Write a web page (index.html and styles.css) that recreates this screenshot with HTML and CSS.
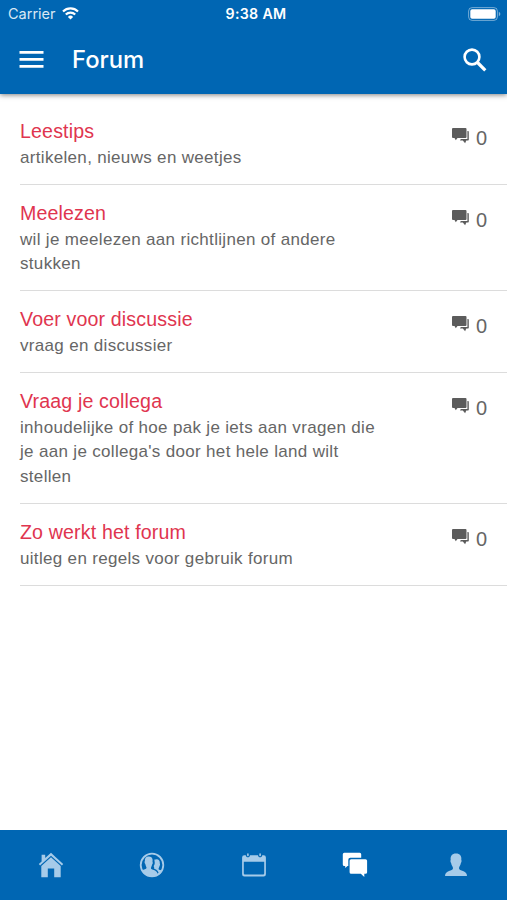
FILE: index.html
```
<!DOCTYPE html>
<html lang="nl">
  <head>
    <meta charset="UTF-8" />
    <meta name="viewport" content="width=device-width, initial-scale=1.0" />
    <title>Forum</title>
    <link rel="stylesheet" href="styles.css">
  </head>
  <body>
    <!-- Icon shared by the forum rows -->
    <svg class="sprite" width="0" height="0">
      <symbol id="comments" viewBox="0 0 17 16">
        <path d="M1 0h12.500a1 1 0 0 1 1 1v8a1 1 0 0 1-1 1H5.500l-1.700 2.200L2.500 10H1a1 1 0 0 1-1-1V1a1 1 0 0 1 1-1z" />
        <path d="M15.400 3h.6a.8.8 0 0 1 .8.8v7.900a.8.8 0 0 1-.8.8h-1.700l-1.200 2.700-2.300-2.700H8l.8-1.600h6.600z" />
      </symbol>
    </svg>

    <header class="header">
      <div class="status-bar">
        <div class="carrier">
          <span>Carrier</span>
          <svg width="17" height="13" viewBox="0 0 17 13" fill="none" stroke="#fff" stroke-width="2.200">
            <path d="M1 4.500a10.800 10.800 0 0 1 15 0" />
            <path d="M3.800 7.500a6.700 6.700 0 0 1 9.400 0" />
            <path d="M8.500 12.600L5.900 9.900a3.700 3.700 0 0 1 5.200 0z" fill="#fff" stroke="none" />
          </svg>
        </div>
        <span class="time">9:38 AM</span>
        <svg class="battery" width="33" height="14" viewBox="0 0 33 14">
          <rect x="0.600" y="0.600" width="28.800" height="12.800" rx="3.500" fill="none" stroke="#fff" stroke-opacity="0.450" />
          <rect x="2.300" y="2.300" width="25.400" height="9.400" rx="1.800" fill="#fff" />
          <path d="M30.800 4.800q1.600 .8 1.600 2.200t-1.600 2.200z" fill="#fff" fill-opacity="0.500" />
        </svg>
      </div>
      <div class="toolbar">
        <svg class="menu-icon" width="25" height="17" viewBox="0 0 25 17" fill="#fff">
          <path d="M.5 0h24v2.700H.5zM.5 7h24v2.700H.5zM.5 14h24v2.700H.5z" />
        </svg>
        <h1>Forum</h1>
        <svg class="search-icon" width="24" height="24" viewBox="0 0 24 24" fill="none" stroke="#fff">
          <circle cx="9" cy="9" r="7.400" stroke-width="2.600" />
          <path d="M14 14l8.300 8.300" stroke-width="3.200" />
        </svg>
      </div>
    </header>

    <main class="forum-list">
      <div class="forum-item">
        <div class="forum-text">
          <h2>Leestips</h2>
          <p>artikelen, nieuws en weetjes</p>
        </div>
        <div class="count"><svg><use href="#comments" /></svg><span>0</span></div>
      </div>
      <div class="forum-item">
        <div class="forum-text">
          <h2>Meelezen</h2>
          <p>wil je meelezen aan richtlijnen of andere stukken</p>
        </div>
        <div class="count"><svg><use href="#comments" /></svg><span>0</span></div>
      </div>
      <div class="forum-item">
        <div class="forum-text">
          <h2>Voer voor discussie</h2>
          <p>vraag en discussier</p>
        </div>
        <div class="count"><svg><use href="#comments" /></svg><span>0</span></div>
      </div>
      <div class="forum-item">
        <div class="forum-text">
          <h2>Vraag je collega</h2>
          <p>inhoudelijke of hoe pak je iets aan vragen die je aan je collega's door het hele land wilt stellen</p>
        </div>
        <div class="count"><svg><use href="#comments" /></svg><span>0</span></div>
      </div>
      <div class="forum-item">
        <div class="forum-text">
          <h2>Zo werkt het forum</h2>
          <p>uitleg en regels voor gebruik forum</p>
        </div>
        <div class="count"><svg><use href="#comments" /></svg><span>0</span></div>
      </div>
    </main>

    <nav class="tabs">
      <a class="tab">
        <svg width="26" height="26" viewBox="0 0 26 26">
          <path d="M13 .8L17.500 5l7.700 6.900-1.300 1.500L13 3.700 2.100 13.400.8 11.900 3.600 9.400V2.700h3.600v3.400z" />
          <path d="M13 5.300l9.700 8.600v11.300h-6.500v-8.700H9.800v8.700H3.300V13.900z" />
        </svg>
      </a>
      <a class="tab">
        <svg width="26" height="26" viewBox="0 0 26 26">
          <circle cx="13" cy="13" r="11.300" fill="none" stroke="#a6cbe9" stroke-width="1.800" />
          <path d="M2.600 18.400c2.600-.9 4.700-1.200 4.900-2.400.2-1-.9-2-1.200-4-.9-1-.9-2.200-.4-2.900C5.400 5.900 7.400 4.200 10 4.500c3.200.2 4 2.500 3.500 5.200.5.800.3 2-.4 2.900-.3 1.900-1.300 2.900-1.100 4 .2 1.200 5.500 1.500 6.300 4.400l.5 2.300C13.400 26 6 24.600 2.600 18.400z" />
          <path d="M15.100 7.800c3.500-1.500 6.200 0 5.700 3.800.5.800.2 1.900-.3 2.500-.3 1.600-1.100 2.200-.9 3.200.2.700 2.300.9 4 1.300-.9 1.700-2 3-3.600 4.100-.2-3.300-2.100-5-4.900-5.900.5-.7-.1-1.500-.4-2.900.9-1.300 1.300-2.800.9-4.200.1-.8-.1-1.400-.5-1.900z" />
        </svg>
      </a>
      <a class="tab">
        <svg width="26" height="26" viewBox="0 0 26 26">
          <path fill-rule="evenodd" d="M3.300 3.200h1.500c.2 2.700 4 2.700 4.200 0h8c.2 2.700 4 2.700 4.200 0h1.500a2.200 2.200 0 0 1 2.200 2.200v16.800a2.200 2.200 0 0 1-2.200 2.200H3.300a2.200 2.200 0 0 1-2.200-2.200V5.400a2.200 2.200 0 0 1 2.200-2.200zM2.800 9.800v11.500c0 .9.500 1.300 1.300 1.300h17.800c.8 0 1.300-.4 1.300-1.300V9.800z" />
          <rect x="6.100" y="1.200" width="1.600" height="3" rx=".8" />
          <rect x="18.300" y="1.200" width="1.600" height="3" rx=".8" />
        </svg>
      </a>
      <a class="tab active">
        <svg width="26" height="26" viewBox="0 0 26 26">
          <path d="M2.300.8h15.400a1.500 1.500 0 0 1 1.500 1.500v3.500H8.300a2 2 0 0 0-2 2V14H5.500l-2.300 2v-2h-.9a1.500 1.500 0 0 1-1.500-1.500V2.300A1.500 1.500 0 0 1 2.300.8z" />
          <path d="M9.200 7.200h14.300a1.600 1.600 0 0 1 1.600 1.600v11.400a1.600 1.600 0 0 1-1.600 1.600h-1.200V25l-3.500-3.200H9.200a1.600 1.600 0 0 1-1.600-1.600V8.800a1.600 1.600 0 0 1 1.600-1.600z" />
        </svg>
      </a>
      <a class="tab">
        <svg width="26" height="26" viewBox="0 0 26 26">
          <path d="M13 1.600c4 0 5.800 2.500 5.300 6.400.5.500.3 2-.4 3-.4 2.500-1.900 3.600-1.900 5.300 0 3.300 8 1.700 8 7.600H2c0-5.900 8-4.300 8-7.600 0-1.700-1.500-2.800-1.900-5.300-.7-1-.9-2.500-.4-3-.5-3.900 1.300-6.400 5.300-6.400z" />
        </svg>
      </a>
    </nav>
  </body>
</html>
```
FILE: styles.css
```
* {
  margin: 0;
  padding: 0;
  box-sizing: border-box;
}

body {
  display: flex;
  flex-direction: column;
  height: 100vh;
  overflow: hidden;
  background: #fff;
  font-family: "Liberation Sans", Arial, sans-serif;
}

.sprite {
  display: none;
}

/* Header */
.header {
  height: 94px;
  flex-shrink: 0;
  background: #0066b3;
  color: #fff;
  font-family: Inter, sans-serif;
  box-shadow: 0 1px 5px rgba(0, 0, 0, 0.5);
}

.status-bar {
  display: grid;
  grid-template-columns: 1fr auto 1fr;
  align-items: center;
  height: 27px;
  padding: 0 6px 0 8px;
  font-size: 14.5px;
}

.carrier {
  display: flex;
  align-items: center;
  gap: 6px;
  color: #d9e8f4;
}

.time {
  padding-left: 3px;
  font-size: 14.2px;
  font-weight: 600;
  letter-spacing: 0.3px;
}

.battery {
  justify-self: end;
}

.toolbar {
  display: flex;
  align-items: center;
  height: 65px;
  padding: 0 20px 0 19px;
}

.toolbar h1 {
  flex: 1;
  margin-left: 28px;
  font-size: 23.8px;
  font-weight: 500;
}

/* Forum list */
.forum-list {
  flex: 1;
  padding: 9px 0 0 20px;
}

.forum-item {
  display: flex;
  justify-content: space-between;
  padding: 16px 20px 13.4px 0;
  border-bottom: 1px solid #dcdcdc;
}

.forum-text {
  width: 365px;
}

.forum-text h2 {
  margin-bottom: 3px;
  color: #e0354f;
  font-size: 19.6px;
  font-weight: 400;
  line-height: 24px;
  letter-spacing: 0.15px;
}

.forum-text p {
  color: #666;
  font-size: 17px;
  line-height: 24.45px;
  letter-spacing: 0.32px;
}

.count {
  display: flex;
  align-items: flex-start;
  gap: 7px;
  color: #666;
  font-size: 20px;
  line-height: 24px;
}

.count svg {
  width: 17px;
  height: 16px;
  margin-top: 9px;
  fill: #5c5c5c;
}

.count span {
  margin-top: 7px;
}

/* Bottom tabs */
.tabs {
  display: flex;
  height: 70px;
  flex-shrink: 0;
  background: #0066b3;
}

.tab {
  flex: 1;
  display: flex;
  justify-content: center;
  align-items: center;
  fill: #a6cbe9;
}

.tab.active {
  fill: #fff;
}
```
